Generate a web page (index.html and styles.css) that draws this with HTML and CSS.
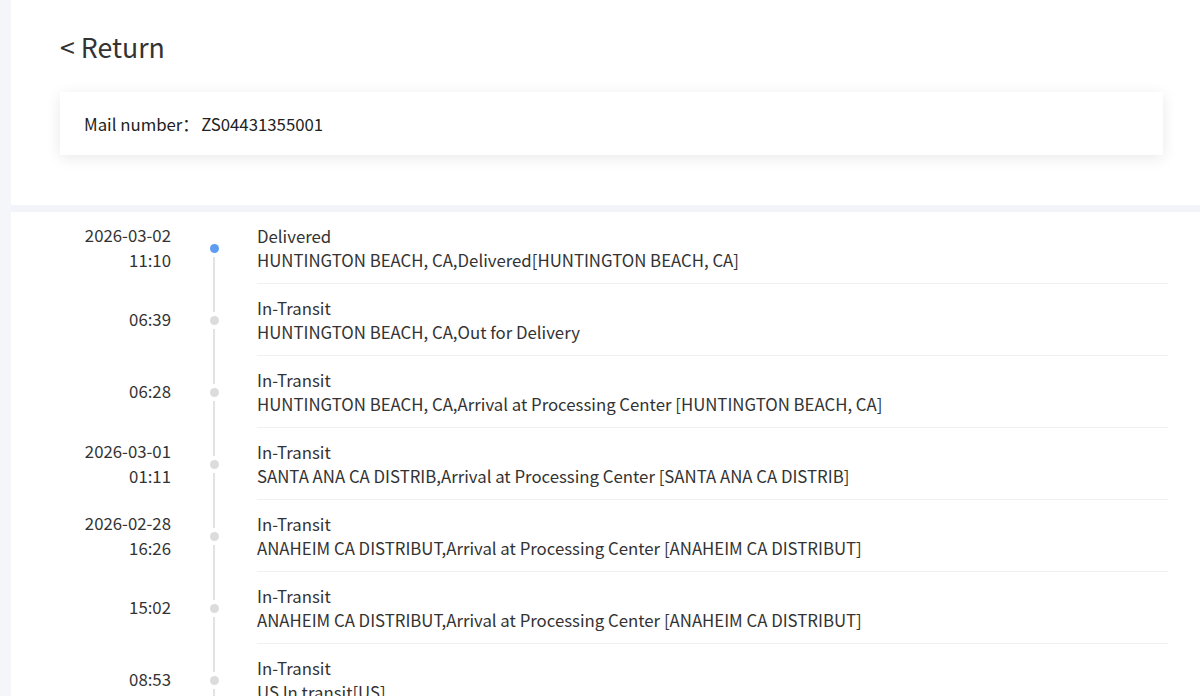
FILE: index.html
```html
<!DOCTYPE html>
<html lang="en">
<head>
<meta charset="utf-8">
<title>Tracking</title>
<link rel="stylesheet" href="styles.css">
</head>
<body>
<div class="page">
  <section class="head">
    <a class="back" href="#">&lt; Return</a>
    <div class="mail-card">
      <span class="mail-label">Mail number：</span><span class="mail-no">ZS04431355001</span>
    </div>
  </section>
  <section class="track">
    <div class="row first">
      <div class="when"><span>2026-03-02</span><span>11:10</span></div>
      <div class="axis"><i class="seg"></i><b class="dot active"></b><i class="seg"></i></div>
      <div class="info"><div class="status">Delivered</div><div class="desc">HUNTINGTON BEACH, CA,Delivered[HUNTINGTON BEACH, CA]</div></div>
    </div>
    <div class="row">
      <div class="when"><span>06:39</span></div>
      <div class="axis"><i class="seg"></i><b class="dot"></b><i class="seg"></i></div>
      <div class="info"><div class="status">In-Transit</div><div class="desc">HUNTINGTON BEACH, CA,Out for Delivery</div></div>
    </div>
    <div class="row">
      <div class="when"><span>06:28</span></div>
      <div class="axis"><i class="seg"></i><b class="dot"></b><i class="seg"></i></div>
      <div class="info"><div class="status">In-Transit</div><div class="desc">HUNTINGTON BEACH, CA,Arrival at Processing Center [HUNTINGTON BEACH, CA]</div></div>
    </div>
    <div class="row">
      <div class="when"><span>2026-03-01</span><span>01:11</span></div>
      <div class="axis"><i class="seg"></i><b class="dot"></b><i class="seg"></i></div>
      <div class="info"><div class="status">In-Transit</div><div class="desc">SANTA ANA CA DISTRIB,Arrival at Processing Center [SANTA ANA CA DISTRIB]</div></div>
    </div>
    <div class="row">
      <div class="when"><span>2026-02-28</span><span>16:26</span></div>
      <div class="axis"><i class="seg"></i><b class="dot"></b><i class="seg"></i></div>
      <div class="info"><div class="status">In-Transit</div><div class="desc">ANAHEIM CA DISTRIBUT,Arrival at Processing Center [ANAHEIM CA DISTRIBUT]</div></div>
    </div>
    <div class="row">
      <div class="when"><span>15:02</span></div>
      <div class="axis"><i class="seg"></i><b class="dot"></b><i class="seg"></i></div>
      <div class="info"><div class="status">In-Transit</div><div class="desc">ANAHEIM CA DISTRIBUT,Arrival at Processing Center [ANAHEIM CA DISTRIBUT]</div></div>
    </div>
    <div class="row">
      <div class="when"><span>08:53</span></div>
      <div class="axis"><i class="seg"></i><b class="dot"></b><i class="seg"></i></div>
      <div class="info"><div class="status">In-Transit</div><div class="desc">US In transit[US]</div></div>
    </div>
  </section>
</div>
</body>
</html>
```

FILE: styles.css
```css
html, body {
  margin: 0;
  padding: 0;
  height: 100%;
  overflow: hidden;
}

body {
  background: #f5f6fa;
  font-family: "Noto Sans CJK SC", "Noto Sans", sans-serif;
  color: #333;
}

.page {
  margin-left: 11px;
  display: flex;
  flex-direction: column;
  gap: 7px;
  background: #f3f4f9;
}

/* header block with the back link and the mail number card */
.head {
  background: #fff;
  padding: 27px 37px 50px 49px;
}

.back {
  display: block;
  font-size: 26.7px;
  line-height: 40px;
  color: #333;
  text-decoration: none;
}

.mail-card {
  margin-top: 25px;
  height: 63px;
  padding: 0 24px;
  display: flex;
  align-items: center;
  background: #fff;
  box-shadow: 0 3px 14px rgba(0, 0, 0, 0.09);
  font-size: 16.8px;
  color: #222;
}

.mail-no {
  margin-left: 2px;
}

/* tracking timeline */
.track {
  background: #fff;
  padding: 0 32px 0 0;
}

.row {
  display: grid;
  grid-template-columns: 160px 86px 1fr;
}

.row.first .axis .seg:first-child {
  visibility: hidden;
}

.when {
  display: flex;
  flex-direction: column;
  justify-content: center;
  align-items: flex-end;
  font-size: 16.8px;
  line-height: 25px;
  color: #333;
  padding-bottom: 1px;
}

.axis {
  display: flex;
  flex-direction: column;
  align-items: center;
}

.seg {
  flex: 1;
  width: 2px;
  background: #e2e2e2;
}

.seg:first-child {
  margin-bottom: 4px;
}

.seg:last-child {
  margin-top: 4px;
}

.dot {
  width: 9px;
  height: 9px;
  border-radius: 50%;
  background: #dcdcdc;
}

.dot.active {
  background: #5e9cf3;
}

.info {
  padding: 12px 0 11px;
  border-bottom: 1px solid #f0f0f0;
  font-size: 16.8px;
  line-height: 24px;
  color: #333;
}
```
